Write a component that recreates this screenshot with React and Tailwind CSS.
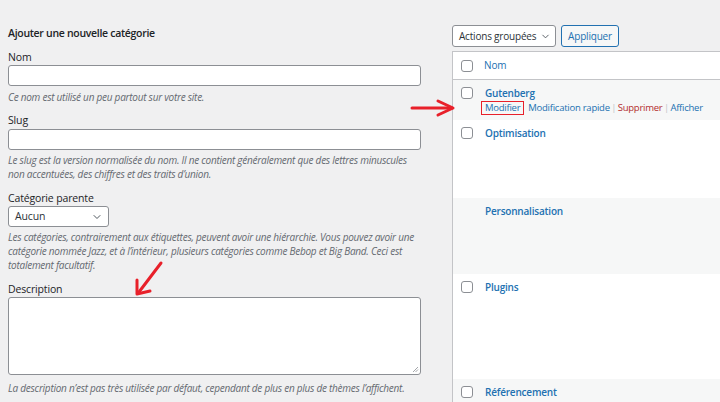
import React from 'react';
import { ChevronDown } from 'lucide-react';

// WP admin "Catégories" screen, add form on the left, list table on the right

const rows = [
  { name: 'Gutenberg', h: 'h-[40px]', bg: 'bg-[#f6f7f7]', box: true, actions: true },
  { name: 'Optimisation', h: 'h-[78px]', bg: 'bg-white', box: true },
  { name: 'Personnalisation', h: 'h-[76px]', bg: 'bg-[#f6f7f7]', box: false },
  { name: 'Plugins', h: 'h-[105px]', bg: 'bg-white', box: true },
  { name: 'Référencement', h: 'h-[40px]', bg: 'bg-[#f6f7f7]', box: true },
];

const Checkbox = () => (
  <span className="block w-[12px] h-[12px] rounded-[3px] border border-[#8c8f94] bg-white" />
);

const Hint = ({ children, className = '' }) => (
  <p className={`text-[10px] leading-[14px] italic tracking-[-0.25px] text-[#646970] ${className}`}>{children}</p>
);

const Label = ({ children, className = '' }) => (
  <div className={`text-[10.5px] leading-[16px] tracking-[-0.15px] text-[#1d2327] ${className}`}>{children}</div>
);

const AddForm = () => (
  <div className="w-[421px] shrink-0 pl-2 pt-[25px]">
    <h2 className="text-[10.5px] leading-[16px] font-semibold tracking-[-0.3px] text-[#1d2327]">Ajouter une nouvelle catégorie</h2>

    <Label className="mt-[8px]">Nom</Label>
    <div className="h-[21px] bg-white border border-[#8c8f94] rounded-[3px]" />
    <Hint className="mt-[4px]">Ce nom est utilisé un peu partout sur votre site.</Hint>

    <Label className="mt-[8px]">Slug</Label>
    <div className="mt-[1px] h-[21px] bg-white border border-[#8c8f94] rounded-[3px]" />
    <Hint className="mt-[3px] pr-[8px]">
      Le slug est la version normalisée du nom. Il ne contient généralement que des lettres minuscules non accentuées, des chiffres et des traits d’union.
    </Hint>

    <Label className="mt-[9px]">Catégorie parente</Label>
    <div className="w-[101px] h-[21px] bg-white border border-[#8c8f94] rounded-[3px] flex items-center justify-between pl-[6px] pr-[5px]">
      <span className="text-[10.5px] tracking-[-0.15px] text-[#2c3338]">Aucun</span>
      <ChevronDown className="w-[12px] h-[12px] text-[#50575e]" strokeWidth={2} />
    </div>
    <Hint className="mt-[3px] -mr-[4px]">
      Les catégories, contrairement aux étiquettes, peuvent avoir une hiérarchie. Vous pouvez avoir une catégorie nommée Jazz, et à l’intérieur, plusieurs catégories comme Bebop et Big Band. Ceci est totalement facultatif.
    </Hint>

    <Label className="mt-[9px]">Description</Label>
    <div className="relative h-[78px] bg-white border border-[#8c8f94] rounded-[3px]">
      <svg className="absolute right-[1px] bottom-[1px]" width="7" height="7" viewBox="0 0 7 7">
        <path d="M1 6 L6 1 M3.5 6 L6 3.5" stroke="#8c8f94" strokeWidth="0.8" />
      </svg>
    </div>
    <Hint className="mt-[6px]">La description n’est pas très utilisée par défaut, cependant de plus en plus de thèmes l’affichent.</Hint>

    {/* red arrow pointing at the description field */}
    <svg className="absolute left-[130px] top-[258px]" width="40" height="42" viewBox="0 0 40 42">
      <path d="M31 5 L9 34" stroke="#e8202a" strokeWidth="3" strokeLinecap="round" />
      <path d="M7 22 L7 36 L20 33" fill="none" stroke="#e8202a" strokeWidth="3" strokeLinecap="round" strokeLinejoin="round" />
    </svg>
  </div>
);

const ListTable = () => (
  <div className="flex-1 ml-[31px] pt-[25px] min-w-0">
    <div className="flex items-center gap-[5px]">
      <div className="w-[104px] h-[22px] bg-white border border-[#8c8f94] rounded-[3px] flex items-center justify-between pl-[6px] pr-[4px]">
        <span className="text-[10px] tracking-[-0.2px] text-[#2c3338] whitespace-nowrap">Actions groupées</span>
        <ChevronDown className="w-[11px] h-[11px] text-[#50575e]" strokeWidth={2} />
      </div>
      <div className="w-[58px] h-[22px] bg-[#f6f7f7] border border-[#2271b1] rounded-[3px] flex items-center justify-center text-[10px] tracking-[-0.2px] text-[#2271b1]">
        Appliquer
      </div>
    </div>

    <div className="mt-[4px] border-l border-t border-[#c3c4c7] bg-white">
      <div className="h-[28px] flex items-center border-b border-[#c3c4c7] pl-[8px]">
        <Checkbox />
        <span className="ml-[11px] text-[10px] tracking-[-0.1px] text-[#2271b1]">Nom</span>
      </div>
      {rows.map(r => (
        <div key={r.name} className={`${r.h} ${r.bg} flex items-start pl-[8px] pt-[6px]`}>
          <div className="w-[12px] mt-[1px]">{r.box && <Checkbox />}</div>
          <div className="ml-[12px]">
            <div className="text-[10px] leading-[14px] font-semibold tracking-[-0.2px] text-[#2271b1]">{r.name}</div>
            {r.actions && (
              <div className="mt-[1px] flex items-center text-[9.5px] leading-[14px] tracking-[-0.25px] text-[#2271b1] whitespace-nowrap">
                <span className="-ml-[4px] px-[3px] border-[1.5px] border-[#e8202a] leading-[12px]">Modifier</span>
                <span className="w-[4px]" />
                <span>Modification rapide</span>
                <span className="text-[#c3c4c7] mx-[1.5px]">|</span>
                <span className="text-[#b32d2e]">Supprimer</span>
                <span className="text-[#c3c4c7] mx-[1.5px]">|</span>
                <span>Afficher</span>
              </div>
            )}
          </div>
        </div>
      ))}
    </div>
  </div>
);

export default function App() {
  return (
    <div className="relative w-[720px] h-[402px] overflow-hidden bg-[#f0f0f1] flex" style={{ fontFamily: '"Open Sans", "Noto Sans", sans-serif' }}>
      <AddForm />
      <ListTable />
      {/* red arrow pointing at "Modifier" */}
      <svg className="absolute left-[410px] top-[99px]" width="46" height="18" viewBox="0 0 46 18">
        <path d="M2 9 L42 9" stroke="#e8202a" strokeWidth="3" strokeLinecap="round" />
        <path d="M28 2 L43 9 L28 16" fill="none" stroke="#e8202a" strokeWidth="3" strokeLinecap="round" strokeLinejoin="round" />
      </svg>
    </div>
  );
}
